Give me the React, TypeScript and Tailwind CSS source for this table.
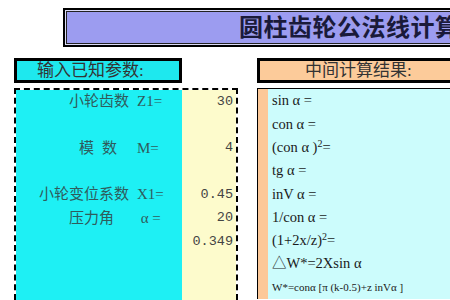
import React from 'react'

const cjk = '"Liberation Serif", "Noto Sans CJK SC", serif'

interface InputRow {
  label?: React.ReactNode
  symbol?: string
  value?: string
}

const inputRows: InputRow[] = [
  { label: '小轮齿数', symbol: 'Z1=', value: '30' },
  {},
  { label: <span className="pr-[12px]">模<span className="ml-[8px]">数</span></span>, symbol: 'M=', value: '4' },
  {},
  { label: '小轮变位系数', symbol: 'X1=', value: '0.45' },
  { label: <span className="pr-[15px]">压力角</span>, symbol: ' α =', value: '20' },
  { value: '0.349' },
  {},
  {},
]

const resultRows: React.ReactNode[] = [
  'sin α =',
  'con α =',
  <span>(con α )<sup className="text-[10px]">2</sup>=</span>,
  'tg α =',
  'inV α =',
  '1/con α =',
  <span>(1+2x/z)<sup className="text-[10px]">2</sup>=</span>,
  '△W*=2Xsin α',
  <span className="text-[11px]">W*=conα [π (k-0.5)+z inVα ]</span>,
]

export default function App() {
  return (
    <div className="w-[450px] h-[300px] overflow-hidden bg-white" style={{ fontFamily: cjk }}>
      {/* title */}
      <div className="pt-[8px] pl-[63px]">
        <div className="w-[440px] h-[39px] border-2 border-black bg-[#dcdcf6] p-px">
          <div className="h-full border border-[#222] bg-[#9c9cf0] flex items-center pl-[172px]">
            <span className="text-[24px] font-bold tracking-[0.5px] text-[#1a1a3a] whitespace-nowrap">
              圆柱齿轮公法线计算
            </span>
          </div>
        </div>
      </div>

      {/* section headers */}
      <div className="flex mt-[11px]">
        <div className="shrink-0 ml-[14px] w-[168px] h-[25px] border-[3px] border-black bg-[#1ee8ee] flex items-center pl-[20px] text-[17px] text-[#333] leading-none">
          输入已知参数:
        </div>
        <div className="shrink-0 ml-[75px] w-[220px] h-[25px] border-[3px] border-black bg-[#fccb9a] flex items-center pl-[45px] text-[17px] text-[#333] leading-none">
          中间计算结果:
        </div>
      </div>

      {/* panels */}
      <div className="flex mt-[5px] items-start">
        <div className="shrink-0 ml-[14px] w-[224px] border-2 border-dashed border-black border-b-0 flex">
          <div className="w-[166px] bg-[#1ef0f4]">
            {inputRows.map((r, i) => (
              <div key={i} className="h-[23.3px] flex items-center pr-[15px] text-[15px] text-[#2f5c5c] leading-none">
                <span className="flex-1 text-right">{r.label}</span>
                <span className="w-[30px] ml-[8px] whitespace-pre">{r.symbol}</span>
              </div>
            ))}
          </div>
          <div className="flex-1 bg-[#fdfbcc]">
            {inputRows.map((r, i) => (
              <div
                key={i}
                className="h-[23.3px] flex items-center justify-end pr-[3px] text-[13.5px] text-[#444] leading-none"
                style={{ fontFamily: '"Liberation Mono", monospace' }}
              >
                {r.value}
              </div>
            ))}
          </div>
        </div>

        <div className="shrink-0 ml-[19px] w-[220px] border-l border-t border-black flex">
          <div className="w-[10px] bg-[#fcc898]" />
          <div className="flex-1 bg-[#ccfcfc]">
            {resultRows.map((r, i) => (
              <div key={i} className="h-[23.3px] flex items-center pl-[4px] text-[14.5px] text-[#1a1a1a] leading-none whitespace-nowrap">
                {r}
              </div>
            ))}
          </div>
        </div>
      </div>
    </div>
  )
}
